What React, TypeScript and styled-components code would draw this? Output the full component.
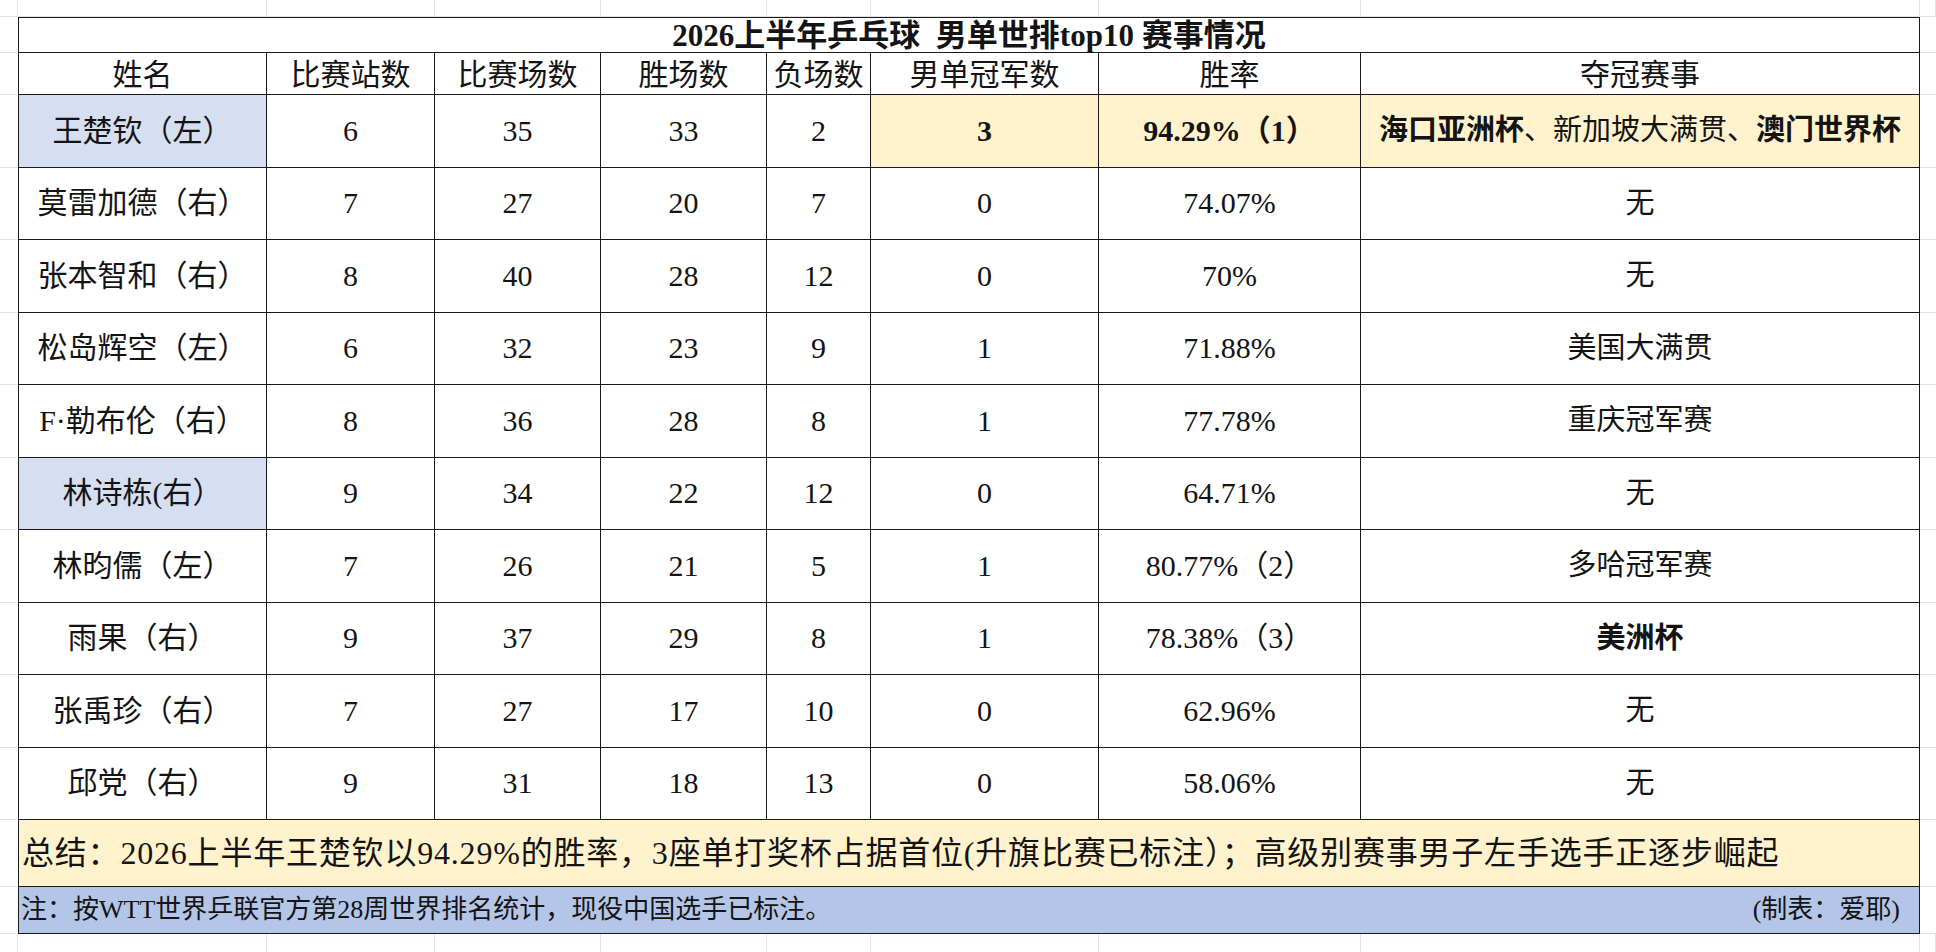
import React from 'react';
import styled, { createGlobalStyle } from 'styled-components';

const COLS = '18px 249px 168px 166px 166px 104px 228px 262px 559px 1fr';
const LINE = '#1a1a1a';
const GRID = '#e2e2e2';
const BLUE = '#b4c6e7';
const PALE_BLUE = '#d6dff1';
const YELLOW = '#fff2cc';

const Global = createGlobalStyle`
  html, body { margin: 0; padding: 0; background: #fff; }
  body {
    width: 1936px;
    height: 952px;
    overflow: hidden;
    font-family: "Liberation Serif", "Noto Sans CJK SC", serif;
    color: #141414;
  }
  * { box-sizing: border-box; }
`;

const Sheet = styled.div`
  width: 1936px;
  height: 952px;
  display: flex;
  flex-direction: column;
  background: #fff;
`;

const Row = styled.div<{ $h: number }>`
  display: grid;
  grid-template-columns: ${COLS};
  height: ${(p) => p.$h}px;
  flex: none;
`;

const GhostRow = styled.div<{ $grow?: boolean }>`
  display: grid;
  grid-template-columns: ${COLS};
  height: 17px;
  flex: ${(p) => (p.$grow ? '1' : 'none')};
`;

const GhostCell = styled.div<{ $bottom?: boolean }>`
  border-right: 1px solid ${GRID};
  border-bottom: ${(p) => (p.$bottom ? `1px solid ${GRID}` : 'none')};
`;

const Gutter = styled.div`
  border-bottom: 1px solid ${GRID};
`;

const Cell = styled.div<{ $bg?: string; $bold?: boolean; $first?: boolean; $top?: boolean; $size?: number }>`
  display: flex;
  align-items: center;
  justify-content: center;
  background: ${(p) => p.$bg || '#fff'};
  border-right: 1px solid ${LINE};
  border-bottom: 1px solid ${LINE};
  border-left: ${(p) => (p.$first ? `1px solid ${LINE}` : 'none')};
  border-top: ${(p) => (p.$top ? `1px solid ${LINE}` : 'none')};
  font-size: ${(p) => p.$size || 30}px;
  font-weight: ${(p) => (p.$bold ? 700 : 400)};
  line-height: 1;
  white-space: nowrap;
`;

const TitleCell = styled(Cell)`
  grid-column: 2 / 10;
  font-size: 31px;
  font-weight: 700;
  border-left: 1px solid ${LINE};
  border-top: 1px solid ${LINE};
  padding-top: 1px;
`;

const SummaryCell = styled(Cell)`
  grid-column: 2 / 10;
  justify-content: flex-start;
  padding-left: 3px;
  font-size: 32px;
  letter-spacing: 0.8px;
  border-left: 1px solid ${LINE};
`;

const NoteCell = styled(Cell)`
  grid-column: 2 / 10;
  justify-content: space-between;
  padding: 0 19px 0 2px;
  font-size: 26px;
  border-left: 1px solid ${LINE};
`;

const HeadCell = styled(Cell)`
  font-size: 30px;
  padding-top: 2px;
`;

const Strong = styled.b`
  font-weight: 700;
`;

type Player = {
  name: string;
  nameHl?: boolean;
  stops: number;
  matches: number;
  wins: number;
  losses: number;
  titles: number;
  rate: string;
  hl?: boolean;
  events: [string, boolean][];
};

const players: Player[] = [
  {
    name: '王楚钦（左）', nameHl: true, stops: 6, matches: 35, wins: 33, losses: 2, titles: 3,
    rate: '94.29%（1）', hl: true,
    events: [['海口亚洲杯', true], ['、新加坡大满贯、', false], ['澳门世界杯', true]],
  },
  { name: '莫雷加德（右）', stops: 7, matches: 27, wins: 20, losses: 7, titles: 0, rate: '74.07%', events: [['无', false]] },
  { name: '张本智和（右）', stops: 8, matches: 40, wins: 28, losses: 12, titles: 0, rate: '70%', events: [['无', false]] },
  { name: '松岛辉空（左）', stops: 6, matches: 32, wins: 23, losses: 9, titles: 1, rate: '71.88%', events: [['美国大满贯', false]] },
  { name: 'F·勒布伦（右）', stops: 8, matches: 36, wins: 28, losses: 8, titles: 1, rate: '77.78%', events: [['重庆冠军赛', false]] },
  { name: '林诗栋(右）', nameHl: true, stops: 9, matches: 34, wins: 22, losses: 12, titles: 0, rate: '64.71%', events: [['无', false]] },
  { name: '林昀儒（左）', stops: 7, matches: 26, wins: 21, losses: 5, titles: 1, rate: '80.77%（2）', events: [['多哈冠军赛', false]] },
  { name: '雨果（右）', stops: 9, matches: 37, wins: 29, losses: 8, titles: 1, rate: '78.38%（3）', events: [['美洲杯', true]] },
  { name: '张禹珍（右）', stops: 7, matches: 27, wins: 17, losses: 10, titles: 0, rate: '62.96%', events: [['无', false]] },
  { name: '邱党（右）', stops: 9, matches: 31, wins: 18, losses: 13, titles: 0, rate: '58.06%', events: [['无', false]] },
];

const headers = ['姓名', '比赛站数', '比赛场数', '胜场数', '负场数', '男单冠军数', '胜率', '夺冠赛事'];

const Ghost: React.FC<{ grow?: boolean; bottom?: boolean }> = ({ grow, bottom }) => (
  <GhostRow $grow={grow}>
    {Array.from({ length: 10 }).map((_, i) => (
      <GhostCell key={i} $bottom={bottom} />
    ))}
  </GhostRow>
);

export default function App() {
  return (
    <>
      <Global />
      <Sheet>
        <Ghost bottom />
        <Row $h={36}>
          <Gutter />
          <TitleCell>2026上半年乒乓球&nbsp;&nbsp;男单世排top10 赛事情况</TitleCell>
          <Gutter />
        </Row>
        <Row $h={42}>
          <Gutter />
          {headers.map((h, i) => (
            <HeadCell key={h} $first={i === 0}>{h}</HeadCell>
          ))}
          <Gutter />
        </Row>
        {players.map((p) => (
          <Row $h={72.5} key={p.name}>
            <Gutter />
            <Cell $first $bg={p.nameHl ? PALE_BLUE : undefined}>{p.name}</Cell>
            <Cell>{p.stops}</Cell>
            <Cell>{p.matches}</Cell>
            <Cell>{p.wins}</Cell>
            <Cell>{p.losses}</Cell>
            <Cell $bg={p.hl ? YELLOW : undefined} $bold={p.hl}>{p.titles}</Cell>
            <Cell $bg={p.hl ? YELLOW : undefined} $bold={p.hl}>{p.rate}</Cell>
            <Cell $bg={p.hl ? YELLOW : undefined} $size={29}>
              {p.events.map(([t, b], i) => (b ? <Strong key={i}>{t}</Strong> : <span key={i}>{t}</span>))}
            </Cell>
            <Gutter />
          </Row>
        ))}
        <Row $h={67}>
          <Gutter />
          <SummaryCell $bg={YELLOW}>
            总结：2026上半年王楚钦以94.29%的胜率，3座单打奖杯占据首位(升旗比赛已标注）；高级别赛事男子左手选手正逐步崛起
          </SummaryCell>
          <Gutter />
        </Row>
        <Row $h={47}>
          <Gutter />
          <NoteCell $bg={BLUE}>
            <span>注：按WTT世界乒联官方第28周世界排名统计，现役中国选手已标注。</span>
            <span>(制表：爱耶)</span>
          </NoteCell>
          <Gutter />
        </Row>
        <Ghost grow />
      </Sheet>
    </>
  );
}
